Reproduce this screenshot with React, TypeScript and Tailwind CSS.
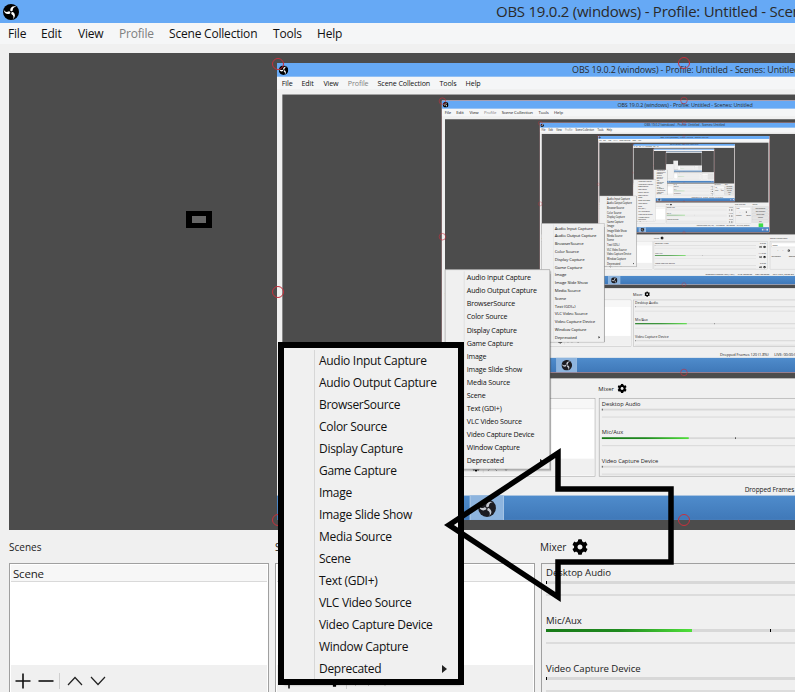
import React from "react";
import { FaCog, FaVolumeUp } from "react-icons/fa";

const FONT = "[font-family:'Open_Sans','Noto_Sans',sans-serif]";
const MAX_DEPTH = 7;

function Logo({ size, dark }: { size: number; dark?: boolean }) {
  const blade = "M-1.5,-3 C-2,-9 4,-13.5 10.5,-10.5 C6,-10.5 3.5,-7.5 3.5,-4 C3.5,-1 -1,-0.5 -1.5,-3Z";
  return (
    <svg width={size} height={size} viewBox="-16 -16 32 32" className="shrink-0">
      <circle r="16" fill={dark ? "#1c1c22" : "#000"} />
      {[0, 120, 240].map((a) => (
        <path key={a} d={blade} fill={dark ? "#c4c8d0" : "#fff"} transform={`rotate(${a})`} />
      ))}
    </svg>
  );
}

const menus = [
  { t: "File", c: "w-[33px]" },
  { t: "Edit", c: "w-[37px]" },
  { t: "View", c: "w-[41px]" },
  { t: "Profile", c: "w-[50px] text-[#808080]" },
  { t: "Scene Collection", c: "w-[104px]" },
  { t: "Tools", c: "w-[44px]" },
  { t: "Help", c: "w-[44px]" },
];

const items = [
  "Audio Input Capture",
  "Audio Output Capture",
  "BrowserSource",
  "Color Source",
  "Display Capture",
  "Game Capture",
  "Image",
  "Image Slide Show",
  "Media Source",
  "Scene",
  "Text (GDI+)",
  "VLC Video Source",
  "Video Capture Device",
  "Window Capture",
  "Deprecated",
];

function ToolIcons({ gear }: { gear?: boolean }) {
  return (
    <div className="flex items-center h-[28px] bg-[#f0f0f0] pl-[4px] pt-[3px]">
      <svg width="16" height="16" viewBox="0 0 16 16" className="shrink-0">
        <path d="M8 0.5V15.5M0.5 8H15.5" stroke="#111" strokeWidth="1.6" />
      </svg>
      <svg width="16" height="16" viewBox="0 0 16 16" className="shrink-0 ml-[7px]">
        <path d="M0.5 8H15.5" stroke="#111" strokeWidth="1.6" />
      </svg>
      {gear && <FaCog className="ml-[8px] text-[13px] text-black shrink-0" />}
      <div className="w-px h-[16px] bg-[#cfcfcf] ml-[5px]" />
      <svg width="16" height="10" viewBox="0 0 16 10" className="shrink-0 ml-[7px]">
        <path d="M1 9L8 1.5L15 9" stroke="#222" strokeWidth="1.2" fill="none" />
      </svg>
      <svg width="16" height="10" viewBox="0 0 16 10" className="shrink-0 ml-[7px]">
        <path d="M1 1L8 8.5L15 1" stroke="#222" strokeWidth="1.2" fill="none" />
      </svg>
    </div>
  );
}

function ListDock({ title, head, gear, width }: { title: string; head: string; gear?: boolean; width: string }) {
  return (
    <div className={`${width} flex flex-col shrink-0`}>
      <div className="h-[16px] leading-[16px] text-[10px] tracking-normal text-[#222]">{title}</div>
      <div className="mt-[8px] h-[132px] border border-[#a0a0a0] flex flex-col bg-white p-px">
        <div className="h-[17px] leading-[17px] pl-[2px] text-[11.5px] text-[#222] bg-[#f7f7f7] border-b border-[#d9d9d9]">{head}</div>
        <div className="flex-1 bg-white" />
        <ToolIcons gear={gear} />
      </div>
    </div>
  );
}

function Track({ name, level }: { name: string; level?: boolean }) {
  return (
    <div className="h-[48px] shrink-0 flex">
      <div className="w-[484px] shrink-0 pl-[4px] pt-[1px] flex flex-col">
        <div className="h-[16px] leading-[16px] text-[9.6px] tracking-[-0.05px] text-[#222]">{name}</div>
        <div className="relative h-[3px] bg-[#d8d8d8]">
          {level ? (
            <>
              <div className="h-full w-[146px] bg-gradient-to-r from-[#187a18] via-[#1f8a1f] to-[#4fe03a]" />
              <div className="absolute left-[224px] top-0 w-px h-[3px] bg-black" />
            </>
          ) : (
            <div className="absolute left-0 top-0 w-px h-[3px] bg-black" />
          )}
        </div>
        <div className="h-[2px] mt-[10px] bg-[#dcdcdc]" />
      </div>
      <div className="flex-1 flex flex-col items-end pr-[8px] text-[10px] text-[#333]">
        <div className="h-[16px] leading-[16px]">{level ? "-14.2 dB" : "0.0 dB"}</div>
        <div className="flex items-center gap-[6px] mt-[3px]">
          <FaVolumeUp className="text-[13px] text-black" />
          <FaCog className="text-[13px] text-black" />
        </div>
      </div>
    </div>
  );
}

function ContextMenu() {
  return (
    <div className="absolute left-[282px] top-[347px] w-[177px] h-[336px] bg-[#f0f0f0] border border-[#979797] shadow-[2px_2px_2px_rgba(0,0,0,0.35)] py-[2px] flex flex-col">
      <div className="absolute left-[31px] top-[2px] bottom-[2px] w-px bg-[#d7d7d7]" />
      {items.map((t, i) => (
        <div key={t} className="h-[22px] leading-[22px] pl-[36px] text-[12px] tracking-[-0.3px] text-[#111] flex items-center relative">
          {t}
          {i === items.length - 1 && (
            <svg width="5" height="8" viewBox="0 0 5 8" className="absolute left-[159px] top-[7px]">
              <path d="M0 0L5 4L0 8Z" fill="#222" />
            </svg>
          )}
        </div>
      ))}
    </div>
  );
}

function Handle({ c }: { c: string }) {
  return <div className={`absolute w-[12px] h-[12px] rounded-full border-[1.5px] border-[#c8303c] ${c}`} />;
}

function Desktop({ depth }: { depth: number }) {
  return (
    <div className={`relative w-[1366px] h-[768px] bg-[#f0f0f0] flex flex-col overflow-hidden tracking-[-0.2px] ${FONT}`}>
      <div className="relative h-[23px] shrink-0 bg-[#66a9f5] flex items-center pl-[3px]">
        <Logo size={16} />
        <div className="absolute left-[496px] top-0 h-[23px] leading-[23px] text-[15px] tracking-[-0.25px] text-[#2a2a2a] whitespace-nowrap">
          OBS 19.0.2 (windows) - Profile: Untitled - Scenes: Untitled
        </div>
      </div>
      <div className="h-[21px] shrink-0 bg-[#f5f6f7] flex items-center pl-[8px] text-[12px] text-[#111]">
        {menus.map((m) => (
          <div key={m.t} className={`${m.c} whitespace-nowrap`}>{m.t}</div>
        ))}
      </div>
      <div className="h-[486px] shrink-0 pt-[9px] pl-[9px] pr-[8px]">
        <div className="relative h-[477px] bg-[#4c4c4c] overflow-hidden">
          {depth < MAX_DEPTH && (
            <div className="absolute left-[268px] top-[10px] w-[813px] h-[457px] border-l-2 border-y border-r-2 border-[#b8303c]" >
              <div className="absolute -left-[2px] -top-px w-[1366px] h-[768px] origin-top-left scale-[0.595]">
                <Desktop depth={depth + 1} />
              </div>
              <Handle c="-left-[7px] -top-[6px]" />
              <Handle c="left-[399px] -top-[7px]" />
              <Handle c="-left-[7px] top-[222px]" />
              <Handle c="-left-[7px] top-[450px]" />
              <Handle c="left-[399px] top-[450px]" />
            </div>
          )}
        </div>
      </div>
      <div className="h-[155px] shrink-0 pt-[9px] pl-[9px] flex items-start">
        <ListDock title="Scenes" head="Scene" width="w-[260px]" />
        <div className="w-[6px] shrink-0" />
        <ListDock title="Sources" head="" gear width="w-[260px]" />
        <div className="w-[6px] shrink-0" />
        <div className="w-[541px] shrink-0 flex flex-col">
          <div className="h-[16px] -ml-px flex items-center gap-[6px] text-[10px] tracking-normal text-[#222]">
            Mixer <FaCog className="text-[16px] text-black" />
          </div>
          <div className="mt-[8px] h-[132px] border border-[#a0a0a0] overflow-hidden flex flex-col">
            <Track name="Desktop Audio" />
            <Track name="Mic/Aux" level />
            <Track name="Video Capture Device" />
          </div>
        </div>
        <div className="w-[10px] shrink-0" />
        <div className="w-[130px] shrink-0 flex flex-col">
          <div className="h-[16px] leading-[16px] text-[10px] tracking-normal text-[#222]">Scene Transitions</div>
          <div className="mt-[8px] h-[132px] border border-[#a0a0a0] p-[6px] text-[11px] text-[#222] flex flex-col gap-[8px]">
            <div className="h-[20px] leading-[18px] border border-[#adadad] bg-white pl-[4px]">Fade</div>
            <div className="flex justify-center gap-[18px] items-center">
              <span>+</span><span>−</span><FaCog className="text-[13px]" />
            </div>
            <div className="flex justify-between"><span>Duration</span><span>300ms</span></div>
          </div>
        </div>
        <div className="w-[8px] shrink-0" />
        <div className="w-[128px] shrink-0 flex flex-col">
          <div className="h-[16px] leading-[16px] text-[10px] tracking-normal text-[#222]">Controls</div>
          <div className="mt-[8px] flex flex-col gap-[4px] text-[11px] text-[#222]">
            {["Start Streaming", "Start Recording", "Studio Mode", "Settings", "Exit"].map((b) => (
              <div key={b} className="h-[22px] leading-[20px] text-center border border-[#adadad] bg-[#e4e4e4]">{b}</div>
            ))}
          </div>
        </div>
      </div>
      <div className="relative h-[42px] shrink-0 flex items-start pt-[25px] pl-[786px] gap-[16px] text-[11px] leading-[14px] text-[#222] whitespace-nowrap">
        <span>Dropped Frames 120 (1.8%)</span>
        <span>LIVE: 00:00:00</span>
        <span>REC: 00:00:00</span>
        <span>CPU: 2.3%, 30.00 fps</span>
        {depth === 4 && <div className="absolute left-[1280px] top-[12px] w-[36px] h-[30px] bg-[#3fdc4a]" />}
      </div>
      <div className="h-[41px] shrink-0 bg-gradient-to-b from-[#4f8ccc] to-[#3f78b8] flex items-stretch pl-[324px] relative">
        <div className="w-[57px] bg-[#8db4de] border-x border-[#c5daf0] flex items-center justify-center">
          <Logo size={30} dark />
        </div>
        <div className="absolute right-[12px] top-[13px] flex gap-[6px]">
          <div className="w-[12px] h-[14px] bg-[#c8d8ec]" />
          <div className="w-[12px] h-[14px] bg-[#9a7fb8]" />
          <div className="w-[12px] h-[14px] bg-[#e4ecf6]" />
        </div>
      </div>
      <ContextMenu />
    </div>
  );
}

export default function App() {
  return (
    <div className="relative w-[795px] h-[692px] overflow-hidden">
      <Desktop depth={0} />
      <div className="absolute left-[278px] top-[342px] w-[186px] h-[343px] border-[6px] border-black" />
      <div className="absolute left-[186px] top-[211px] w-[26px] h-[17px] border-x-[6px] border-y-[5px] border-black bg-[#666666]" />
      <svg width="795" height="692" viewBox="0 0 795 692" className="absolute left-0 top-0 pointer-events-none">
        <path d="M449 525L558 453V489H671V562H558V597Z" fill="none" stroke="#000" strokeWidth="5.5" strokeLinejoin="miter" />
      </svg>
    </div>
  );
}
